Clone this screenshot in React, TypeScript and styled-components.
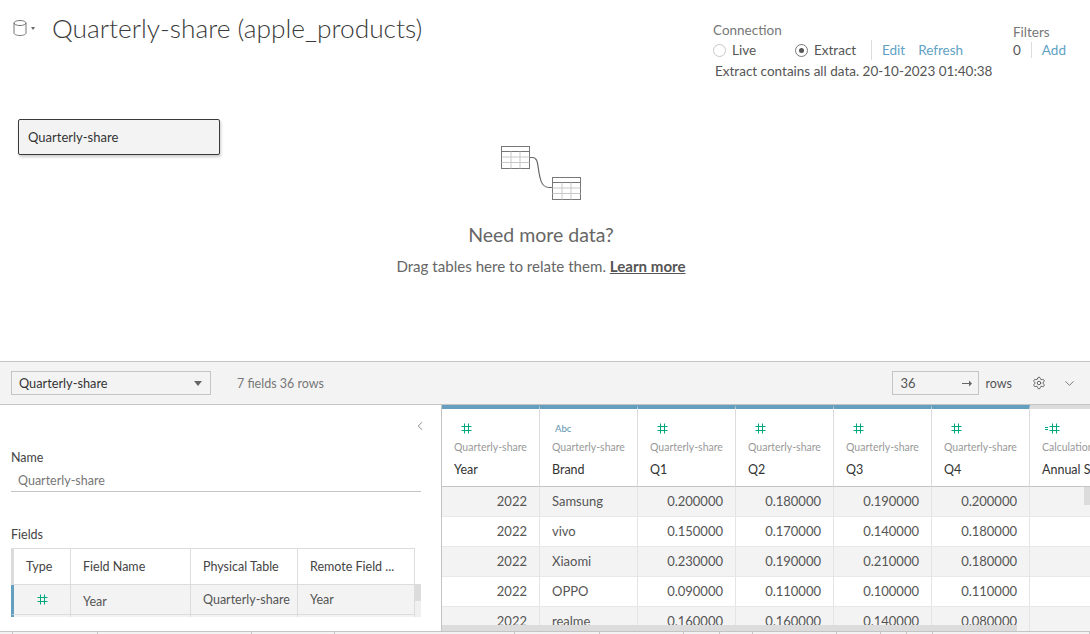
import React from "react";
import styled, { createGlobalStyle } from "styled-components";
import { ChevronDown, ChevronLeft, Settings } from "lucide-react";

const colors = {
  ink: "#333333",
  text: "#555555",
  muted: "#777777",
  faint: "#999999",
  link: "#5fa2c4",
  line: "#dcdcdc",
  lineDark: "#c4c4c4",
  panel: "#f3f3f3",
  blue: "#659fc0",
  green: "#00a77f",
};

const GlobalStyle = createGlobalStyle`
  html, body {
    margin: 0;
    padding: 0;
    background: #fff;
    font-family: "Lato", "Open Sans", sans-serif;
    color: ${colors.text};
  }
  * { box-sizing: border-box; }
`;

const Page = styled.div`
  width: 1090px;
  height: 634px;
  overflow: hidden;
  display: grid;
  grid-template-rows: 361px 44px 226px 3px;
`;

/* top: connection header + canvas */
const TopPane = styled.section`
  display: flex;
  flex-direction: column;
`;

const Header = styled.header`
  height: 113px;
  display: flex;
  padding: 14px 0 0 13px;
`;

const TitleGroup = styled.div`
  width: 700px;
  height: 28px;
  display: flex;
  align-items: center;
`;

const DbButton = styled.div`
  width: 26px;
  margin-right: 13px;
  display: flex;
  align-items: center;
  gap: 4px;
`;

const Caret = styled.span`
  width: 0;
  height: 0;
  border-left: 2.5px solid transparent;
  border-right: 2.5px solid transparent;
  border-top: 3px solid #666;
`;

const Title = styled.h1`
  margin: 0;
  font-size: 26.3px;
  font-weight: 300;
  color: #3a3a3a;
  white-space: nowrap;
`;

const Connection = styled.div`
  width: 300px;
  padding-top: 8px;
  font-size: 13.5px;
`;

const FieldLabel = styled.div`
  color: ${colors.muted};
  font-size: 13.5px;
  line-height: 16px;
`;

const ConnectionRow = styled.div`
  display: flex;
  align-items: center;
  height: 20px;
  margin-top: 2px;
`;

const RadioOption = styled.label<{ $width: number }>`
  width: ${(p) => p.$width}px;
  display: flex;
  align-items: center;
  gap: 6px;
  color: ${colors.text};
`;

const Radio = styled.span<{ $on?: boolean }>`
  width: 13px;
  height: 13px;
  border-radius: 50%;
  border: 1px solid ${(p) => (p.$on ? "#777" : "#c8c8c8")};
  display: flex;
  align-items: center;
  justify-content: center;
  &::after {
    content: "";
    width: 5px;
    height: 5px;
    border-radius: 50%;
    background: ${(p) => (p.$on ? "#555" : "transparent")};
  }
`;

const Divider = styled.span`
  width: 1px;
  height: 20px;
  background: ${colors.line};
  margin: 0 10px 0 14px;
`;

const LinkText = styled.a<{ $gap?: number }>`
  color: ${colors.link};
  margin-right: ${(p) => p.$gap ?? 0}px;
`;

const ExtractNote = styled.div`
  margin: 2px 0 0 2px;
  line-height: 18px;
  white-space: nowrap;
  color: ${colors.text};
`;

const Filters = styled.div`
  padding-top: 10px;
  font-size: 13.5px;
`;

const FilterRow = styled.div`
  display: flex;
  align-items: center;
  height: 16px;
  margin-top: 2px;
`;

const Count = styled.span`
  color: ${colors.text};
`;

const FilterDivider = styled(Divider)`
  height: 16px;
  margin: 0 10px 0 10px;
`;

const Canvas = styled.div`
  flex: 1;
  display: grid;
  grid-template-columns: 1fr;
  padding: 6px 26px 0 18px;
  align-items: start;
`;

const TableCard = styled.div`
  grid-area: 1 / 1;
  justify-self: start;
  width: 202px;
  height: 36px;
  padding: 0 9px;
  display: flex;
  align-items: center;
  background: ${colors.panel};
  border: 1px solid #3a3a3a;
  border-radius: 2px;
  box-shadow: 1px 2px 3px rgba(0, 0, 0, 0.2);
  font-size: 13px;
  color: ${colors.ink};
`;

const EmptyHint = styled.div`
  grid-area: 1 / 1;
  justify-self: center;
  padding-top: 27px;
  display: flex;
  flex-direction: column;
  align-items: center;
`;

const HintTitle = styled.div`
  margin-top: 23px;
  font-size: 19.5px;
  line-height: 24px;
  color: #666;
`;

const HintText = styled.div`
  margin-top: 9px;
  font-size: 15.1px;
  line-height: 20px;
  color: #666;
  a {
    color: #555;
    font-weight: 700;
    text-decoration: underline;
  }
`;

/* toolbar */
const Toolbar = styled.div`
  display: flex;
  align-items: center;
  padding: 0 13px 0 11px;
  background: ${colors.panel};
  border-top: 1px solid ${colors.lineDark};
  border-bottom: 1px solid ${colors.lineDark};
`;

const TableSelect = styled.div`
  width: 200px;
  height: 24px;
  padding: 0 8px 0 7px;
  display: flex;
  align-items: center;
  justify-content: space-between;
  border: 1px solid ${colors.lineDark};
  font-size: 12.75px;
  color: ${colors.ink};
`;

const SelectCaret = styled.span`
  width: 0;
  height: 0;
  border-left: 4px solid transparent;
  border-right: 4px solid transparent;
  border-top: 5px solid #666;
`;

const ToolbarInfo = styled.span`
  margin-left: 26px;
  flex: 1;
  font-size: 12.5px;
  color: ${colors.muted};
`;

const RowsInput = styled.div`
  width: 87px;
  height: 24px;
  padding: 0 6px 0 8px;
  display: flex;
  align-items: center;
  justify-content: space-between;
  border: 1px solid ${colors.lineDark};
  font-size: 13px;
  color: ${colors.text};
`;

const RowsLabel = styled.span`
  margin: 0 20px 0 7px;
  font-size: 12.5px;
  color: ${colors.text};
`;

const ToolIcons = styled.div`
  display: flex;
  align-items: center;
  gap: 16px;
  color: #555;
`;

/* bottom: metadata pane + data grid */
const BottomPane = styled.section`
  display: grid;
  grid-template-columns: 442px 1fr;
  min-height: 0;
`;

const MetaPane = styled.div`
  position: relative;
  padding: 45px 20px 0 11px;
  border-right: 1px solid ${colors.lineDark};
`;

const CollapseButton = styled.span`
  position: absolute;
  top: 14px;
  right: 14px;
  color: #666;
  display: flex;
`;

const MetaLabel = styled.div`
  font-size: 12.5px;
  line-height: 16px;
  color: #444;
`;

const NameInput = styled.div`
  margin-top: 4px;
  padding: 0 7px;
  height: 22px;
  line-height: 22px;
  font-size: 12.5px;
  color: ${colors.muted};
  border-bottom: 1px solid ${colors.lineDark};
`;

const FieldsBlock = styled.div`
  margin-top: 35px;
`;

const FieldsWrap = styled.div`
  position: relative;
  margin-top: 5px;
  width: 410px;
  height: 69px;
  overflow: hidden;
`;

const FieldsTable = styled.div`
  width: 404px;
  display: grid;
  grid-template-columns: 60px 120px 107px 117px;
  grid-auto-rows: 30px;
  border-top: 1px solid ${colors.line};
`;

const FieldHead = styled.div<{ $first?: boolean }>`
  height: 36px;
  margin-bottom: -6px;
  padding-left: 12px;
  display: flex;
  align-items: center;
  font-size: 12.5px;
  color: #444;
  border-right: 1px solid ${colors.line};
  border-bottom: 1px solid ${colors.line};
  border-left: ${(p) => (p.$first ? `3px solid ${colors.line}` : "none")};
  white-space: nowrap;
`;

const FieldCell = styled.div<{ $first?: boolean; $center?: boolean; $drop?: number }>`
  margin-top: 6px;
  height: 30px;
  padding-left: ${(p) => (p.$center ? 0 : 12)}px;
  padding-top: ${(p) => p.$drop ?? 0}px;
  display: flex;
  align-items: center;
  justify-content: ${(p) => (p.$center ? "center" : "flex-start")};
  background: ${colors.panel};
  font-size: 12.5px;
  color: ${colors.text};
  white-space: nowrap;
  border-right: 1px solid ${colors.line};
  border-bottom: 1px solid ${colors.line};
  border-left: ${(p) => (p.$first ? `3px solid ${colors.blue}` : "none")};
`;

const FieldsScroll = styled.div`
  position: absolute;
  top: 36px;
  right: 0;
  width: 6px;
  height: 33px;
  background: #f0f0f0;
  &::before {
    content: "";
    display: block;
    height: 17px;
    background: #dcdcdc;
  }
`;

const GridPane = styled.div`
  position: relative;
  overflow: hidden;
`;

const DataRow = styled.div`
  display: grid;
  grid-template-columns: repeat(7, 98px);
`;

const ColumnHead = styled.div<{ $calc?: boolean }>`
  height: 82px;
  padding: 11px 0 0 12px;
  border-top: 4px solid ${(p) => (p.$calc ? colors.line : colors.blue)};
  border-right: 1px solid ${colors.line};
  border-bottom: 1px solid ${colors.lineDark};
  white-space: nowrap;
  overflow: hidden;
`;

const ColumnType = styled.div<{ $indent: number }>`
  height: 16px;
  padding-left: ${(p) => p.$indent}px;
  display: flex;
  align-items: center;
`;

const AbcGlyph = styled.span`
  font-size: 9.5px;
  color: #5c93ad;
`;

const ColumnSource = styled.div`
  margin-top: 4px;
  font-size: 10.5px;
  line-height: 14px;
  color: ${colors.faint};
`;

const ColumnName = styled.div`
  margin-top: 8px;
  font-size: 12.5px;
  line-height: 16px;
  color: ${colors.ink};
`;

const DataCell = styled.div<{ $alt: boolean; $left?: boolean }>`
  height: 30px;
  padding: 0 12px 1px;
  display: flex;
  align-items: center;
  justify-content: ${(p) => (p.$left ? "flex-start" : "flex-end")};
  background: ${(p) => (p.$alt ? colors.panel : "#fff")};
  border-right: 1px solid #e4e4e4;
  border-bottom: 1px solid #e8e8e8;
  font-size: 13px;
  color: ${colors.text};
`;

const GridScrollX = styled.div`
  position: absolute;
  left: 0;
  bottom: 0;
  width: 575px;
  height: 6px;
  background: #dcdcdc;
`;

const GridScrollY = styled.div`
  position: absolute;
  top: 82px;
  right: 0;
  width: 6px;
  height: 18px;
  background: #dcdcdc;
`;

const TabStrip = styled.div`
  display: grid;
  grid-template-columns: 13px 85px 154px 83px 180px 85px 84px 36px 33px 84px 44px 26px 26px 1fr;
  background: ${colors.panel};
  border-top: 1px solid ${colors.lineDark};
`;

const TabCell = styled.span`
  border-right: 1px solid ${colors.lineDark};
`;

const HashIcon: React.FC<{ calc?: boolean }> = ({ calc }) => (
  <svg width={calc ? 15 : 11} height="11" viewBox={calc ? "0 0 15 11" : "0 0 11 11"} fill="none" stroke={colors.green} strokeWidth="1">
    {calc ? <path d="M0 4.5h3M0 6.5h3" /> : null}
    <g transform={calc ? "translate(4 0)" : undefined}>
      <path d="M3.5 0.5v10M7.5 0.5v10M0.5 3.5h10M0.5 7.5h10" />
    </g>
  </svg>
);

const DatabaseIcon = () => (
  <svg width="14" height="16" viewBox="0 0 14 16" fill="none" stroke="#777" strokeWidth="1">
    <ellipse cx="7" cy="3" rx="6" ry="2.5" />
    <path d="M1 3v10c0 1.4 2.7 2.5 6 2.5s6-1.1 6-2.5V3" />
  </svg>
);

const TableGlyph: React.FC<{ x: number; y: number }> = ({ x, y }) => (
  <g transform={`translate(${x} ${y})`}>
    <rect x="0.5" y="0.5" width="28" height="22" fill="#fff" stroke="#777" />
    <path d="M0.5 5.5h28" stroke="#777" />
    <path d="M0.5 11h28M0.5 16.5h28M10 5.5v17M19 5.5v17" stroke="#c8c8c8" />
  </g>
);

const RelateIcon = () => (
  <svg width="81" height="54" viewBox="0 0 81 54" fill="none">
    <path d="M29 11.5h2c7 0 5 8 8 20 1 5 3 10 9 10h4" stroke="#666" strokeWidth="1.2" />
    <TableGlyph x={0} y={0} />
    <TableGlyph x={51} y={31} />
  </svg>
);

const ArrowIcon = () => (
  <svg width="10" height="7" viewBox="0 0 10 7" fill="#666">
    <path d="M0 3h7V0.5L10 3.5 7 6.5V4H0z" />
  </svg>
);

const columns = [
  { name: "Year", source: "Quarterly-share", type: "num", indent: 7 },
  { name: "Brand", source: "Quarterly-share", type: "abc", indent: 3 },
  { name: "Q1", source: "Quarterly-share", type: "num", indent: 7 },
  { name: "Q2", source: "Quarterly-share", type: "num", indent: 7 },
  { name: "Q3", source: "Quarterly-share", type: "num", indent: 7 },
  { name: "Q4", source: "Quarterly-share", type: "num", indent: 7 },
  { name: "Annual Share", source: "Calculation", type: "calc", indent: 3 },
];

const rows = [
  ["2022", "Samsung", "0.200000", "0.180000", "0.190000", "0.200000"],
  ["2022", "vivo", "0.150000", "0.170000", "0.140000", "0.180000"],
  ["2022", "Xiaomi", "0.230000", "0.190000", "0.210000", "0.180000"],
  ["2022", "OPPO", "0.090000", "0.110000", "0.100000", "0.110000"],
  ["2022", "realme", "0.160000", "0.160000", "0.140000", "0.080000"],
];

export default function App() {
  return (
    <Page>
      <GlobalStyle />
      <TopPane>
        <Header>
          <TitleGroup>
            <DbButton>
              <DatabaseIcon />
              <Caret />
            </DbButton>
            <Title>Quarterly-share (apple_products)</Title>
          </TitleGroup>
          <Connection>
            <FieldLabel>Connection</FieldLabel>
            <ConnectionRow>
              <RadioOption $width={82}>
                <Radio />
                Live
              </RadioOption>
              <RadioOption $width={62}>
                <Radio $on />
                Extract
              </RadioOption>
              <Divider />
              <LinkText $gap={13}>Edit</LinkText>
              <LinkText>Refresh</LinkText>
            </ConnectionRow>
            <ExtractNote>Extract contains all data. 20-10-2023 01:40:38</ExtractNote>
          </Connection>
          <Filters>
            <FieldLabel>Filters</FieldLabel>
            <FilterRow>
              <Count>0</Count>
              <FilterDivider />
              <LinkText>Add</LinkText>
            </FilterRow>
          </Filters>
        </Header>
        <Canvas>
          <TableCard>Quarterly-share</TableCard>
          <EmptyHint>
            <RelateIcon />
            <HintTitle>Need more data?</HintTitle>
            <HintText>
              Drag tables here to relate them. <a>Learn more</a>
            </HintText>
          </EmptyHint>
        </Canvas>
      </TopPane>

      <Toolbar>
        <TableSelect>
          Quarterly-share
          <SelectCaret />
        </TableSelect>
        <ToolbarInfo>7 fields 36 rows</ToolbarInfo>
        <RowsInput>
          36
          <ArrowIcon />
        </RowsInput>
        <RowsLabel>rows</RowsLabel>
        <ToolIcons>
          <Settings size={14} strokeWidth={1.5} />
          <ChevronDown size={15} strokeWidth={1.2} />
        </ToolIcons>
      </Toolbar>

      <BottomPane>
        <MetaPane>
          <CollapseButton>
            <ChevronLeft size={14} strokeWidth={1.3} />
          </CollapseButton>
          <MetaLabel>Name</MetaLabel>
          <NameInput>Quarterly-share</NameInput>
          <FieldsBlock>
            <MetaLabel>Fields</MetaLabel>
            <FieldsWrap>
              <FieldsTable>
                <FieldHead $first>Type</FieldHead>
                <FieldHead>Field Name</FieldHead>
                <FieldHead>Physical Table</FieldHead>
                <FieldHead>Remote Field ...</FieldHead>
                <FieldCell $first $center>
                  <HashIcon />
                </FieldCell>
                <FieldCell $drop={3}>Year</FieldCell>
                <FieldCell>Quarterly-share</FieldCell>
                <FieldCell>Year</FieldCell>
                <FieldCell $first />
                <FieldCell />
                <FieldCell />
                <FieldCell />
              </FieldsTable>
              <FieldsScroll />
            </FieldsWrap>
          </FieldsBlock>
        </MetaPane>

        <GridPane>
          <DataRow>
            {columns.map((col) => (
              <ColumnHead key={col.name} $calc={col.type === "calc"}>
                <ColumnType $indent={col.indent}>
                  {col.type === "abc" ? <AbcGlyph>Abc</AbcGlyph> : <HashIcon calc={col.type === "calc"} />}
                </ColumnType>
                <ColumnSource>{col.source}</ColumnSource>
                <ColumnName>{col.name}</ColumnName>
              </ColumnHead>
            ))}
          </DataRow>
          {rows.map((row, r) => (
            <DataRow key={r}>
              {row.map((value, c) => (
                <DataCell key={c} $alt={r % 2 === 0} $left={c === 1}>
                  {value}
                </DataCell>
              ))}
              <DataCell $alt={r % 2 === 0} />
            </DataRow>
          ))}
          <GridScrollX />
          <GridScrollY />
        </GridPane>
      </BottomPane>

      <TabStrip>
        {Array.from({ length: 14 }).map((_, i) => (
          <TabCell key={i} />
        ))}
      </TabStrip>
    </Page>
  );
}
